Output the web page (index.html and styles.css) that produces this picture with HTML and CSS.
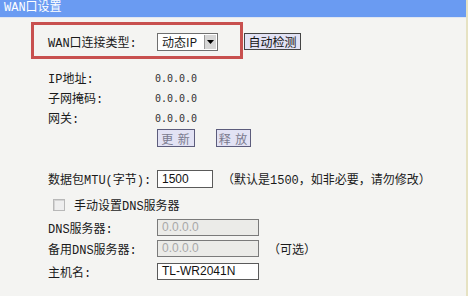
FILE: index.html
```html
<!DOCTYPE html>
<html lang="zh-CN">
<head>
<meta charset="utf-8">
<title>WAN口设置</title>
<link rel="stylesheet" href="styles.css">
</head>
<body>
<div class="page">
  <div class="header">WAN口设置</div>
  <div class="content">
    <div class="row-type">
      <div class="highlight">
        <span class="label">WAN口连接类型:</span>
        <div class="select"><span class="select-text">动态IP</span><span class="select-btn"><svg width="7" height="4" viewBox="0 0 7 4"><path d="M0 0h7L3.5 4z" fill="#000"/></svg></span></div>
      </div>
      <div class="btn btn-dark">自动检测</div>
    </div>

    <div class="row row-first"><span class="label">IP地址:</span><span class="ip">0.0.0.0</span></div>
    <div class="row"><span class="label">子网掩码:</span><span class="ip">0.0.0.0</span></div>
    <div class="row"><span class="label">网关:</span><span class="ip">0.0.0.0</span></div>
    <div class="row row-btns"><span class="label"></span><div class="btn btn-gray">更 新</div><div class="btn btn-gray btn-second">释 放</div></div>

    <div class="row row-mtu"><span class="label">数据包MTU(字节):</span><div class="input input-short">1500</div><span class="note">（默认是1500，如非必要，请勿修改）</span></div>
    <div class="row row-check"><span class="checkbox"></span><span class="check-label">手动设置DNS服务器</span></div>
    <div class="row row-dns"><span class="label">DNS服务器:</span><div class="input input-disabled">0.0.0.0</div></div>
    <div class="row row-dns2"><span class="label">备用DNS服务器:</span><div class="input input-disabled">0.0.0.0</div><span class="note note-opt">（可选）</span></div>
    <div class="row row-host"><span class="label">主机名:</span><div class="input">TL-WR2041N</div></div>
  </div>
</div>
</body>
</html>
```

FILE: styles.css
```css
html, body {
  margin: 0;
  padding: 0;
  background: #ffffff;
}
body {
  font-family: "Noto Sans CJK SC", "Noto Sans", sans-serif;
  font-size: 12px;
  color: #1a1a1a;
}
.page {
  width: 466px;
  height: 296px;
  background: #f4f4f2;
  border-right: 2px solid #e6e2c2;
  overflow: hidden;
}
.header {
  height: 17px;
  line-height: 17px;
  background: #6a9bf2;
  color: #ffffff;
  padding-left: 4px;
  font-family: "Liberation Mono", "Noto Sans CJK SC", monospace;
  font-size: 12px;
  border-bottom: 1px solid #dfe6f2;
}
.content {
  display: flex;
  flex-direction: column;
}
.row-type {
  display: flex;
  align-items: center;
  margin-top: 4px;
  margin-left: 31px;
}
.highlight {
  display: flex;
  align-items: center;
  border: 3px solid #c8504f;
  padding: 8px 22px 5px 14px;
  height: 18px;
  box-sizing: content-box;
}
.label, .check-label, .note {
  font-family: "Liberation Mono", "Noto Sans CJK SC", monospace;
}
.label {
  width: 109px;
  flex: none;
  white-space: nowrap;
}
.select {
  display: flex;
  width: 59px;
  height: 16px;
  border: 1px solid #6f6f6f;
  background: #ffffff;
}
.select-text {
  flex: 1;
  padding-left: 4px;
  line-height: 16px;
  font-size: 12px;
}
.select-btn {
  width: 11px;
  height: 14px;
  margin: 1px 1px 0 0;
  background: #d6d6d6;
  border-left: 1px solid #999;
  display: flex;
  align-items: center;
  justify-content: center;
}
.btn {
  display: flex;
  align-items: center;
  justify-content: center;
  height: 16px;
  box-sizing: border-box;
  background: #e2e2f4;
  font-size: 12px;
  white-space: nowrap;
}
.btn-dark {
  width: 57px;
  height: 17px;
  border: 1px solid #444;
  color: #111;
  margin-top: 1px;
  margin-left: 1px;
}
.btn-gray {
  width: 38px;
  height: 18px;
  border: 1px solid #5c5c7c;
  color: #7a7a8e;
  letter-spacing: 1px;
}
.btn-second {
  width: 35px;
  margin-left: 21px;
}
.row {
  display: flex;
  align-items: center;
  height: 20px;
  padding-left: 48px;
}
.row-first {
  margin-top: 9px;
}
.ip {
  font-family: "DejaVu Sans Mono", monospace;
  font-size: 10px;
  color: #333;
  margin-left: -2px;
}
.row-mtu {
  margin-top: 20px;
  height: 22px;
}
.input {
  width: 102px;
  height: 17px;
  box-sizing: border-box;
  border: 1px solid #5a5a5a;
  background: #ffffff;
  font-family: "Liberation Sans", Arial, sans-serif;
  font-size: 12px;
  line-height: 15px;
  padding-left: 4px;
  color: #111;
}
.input-short {
  width: 56px;
  height: 18px;
  line-height: 16px;
}
.input-disabled {
  background: #ebebe8;
  color: #a8a8a8;
  border-color: #7a7a7a;
}
.note {
  margin-left: 9px;
  white-space: nowrap;
}
.row-check {
  margin-top: 5px;
  padding-left: 53px;
}
.checkbox {
  width: 10px;
  height: 10px;
  border: 1px solid #b8b8b8;
  background: #eeeeee;
  box-shadow: inset 1px 1px 0 #d4d4d4;
}
.check-label {
  margin-left: 9px;
}
.row-dns {
  margin-top: 2px;
  height: 21px;
}
.row-dns2 {
  height: 21px;
}
.row-host {
  margin-top: 2px;
  height: 21px;
}
```
